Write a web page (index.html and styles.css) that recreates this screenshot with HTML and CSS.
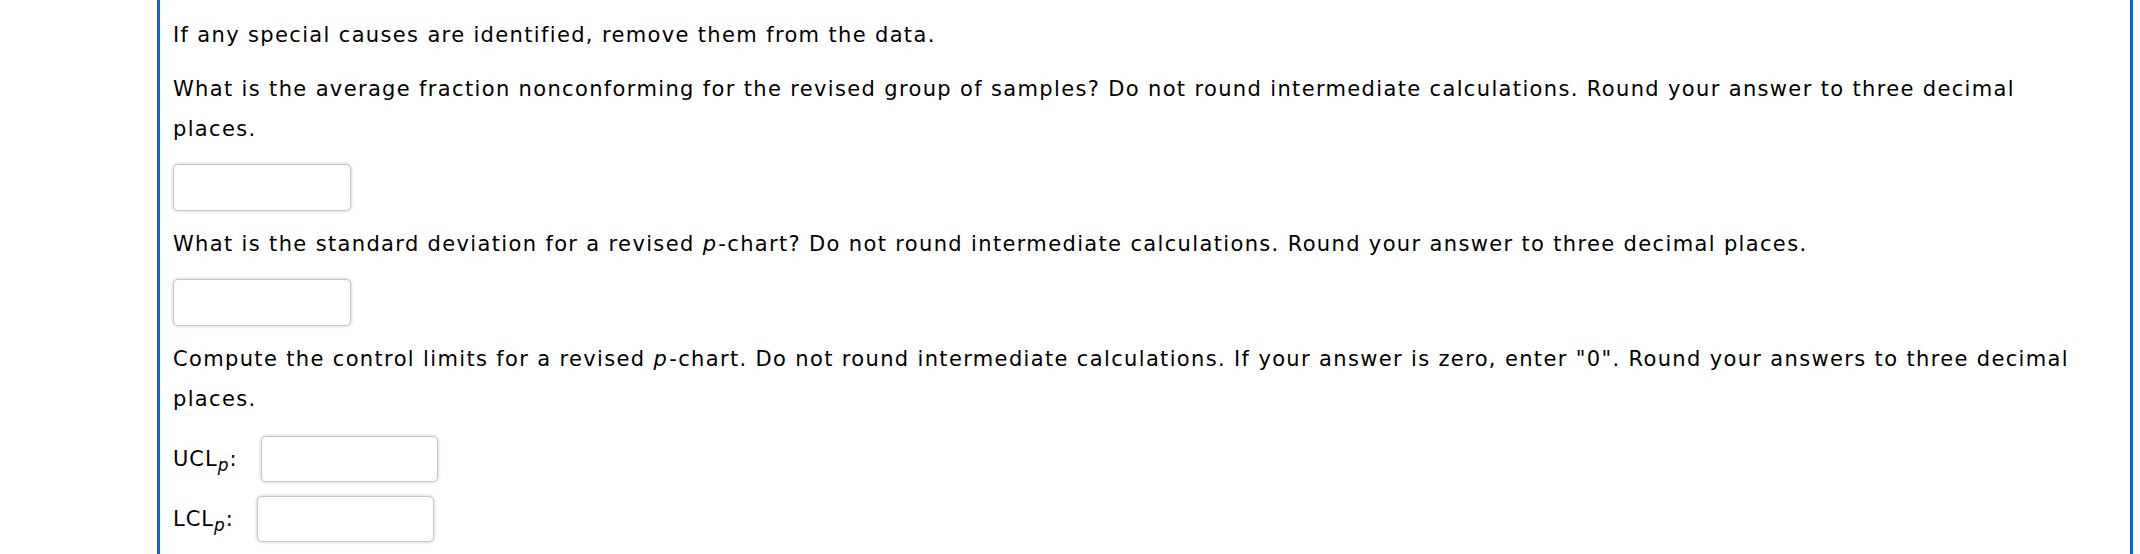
FILE: index.html
```html
<!DOCTYPE html>
<html lang="en">
<head>
<meta charset="utf-8">
<title>Revised p-chart</title>
<link rel="stylesheet" href="styles.css">
</head>
<body>
<div class="panel">
  <p class="q q-first">If any special causes are identified, remove them from the data.</p>
  <p class="q">What is the average fraction nonconforming for the revised group of samples? Do not round intermediate calculations. Round your answer to three decimal places.</p>
  <div class="ans"><input class="box" type="text" aria-label="average fraction nonconforming"></div>
  <p class="q">What is the standard deviation for a revised <i>p</i>-chart? Do not round intermediate calculations. Round your answer to three decimal places.</p>
  <div class="ans"><input class="box" type="text" aria-label="standard deviation"></div>
  <p class="q">Compute the control limits for a revised <i>p</i>-chart. Do not round intermediate calculations. If your answer is zero, enter "0". Round your answers to three decimal places.</p>
  <div class="row row-ucl"><span class="lbl">UCL<sub><i>p</i></sub>:</span><input class="box box-sm" type="text" aria-label="UCL"></div>
  <div class="row row-lcl"><span class="lbl">LCL<sub><i>p</i></sub>:</span><input class="box box-sm" type="text" aria-label="LCL"></div>
</div>
</body>
</html>
```

FILE: styles.css
```css
html, body {
  margin: 0;
  padding: 0;
  background: #ffffff;
  height: 100%;
  overflow: hidden;
}

body {
  font-family: "DejaVu Sans", Verdana, sans-serif;
  font-size: 21px;
  color: #000000;
}

.panel {
  box-sizing: border-box;
  margin-left: 157px;
  width: 1976px;
  height: 554px;
  border-left: 3px solid #0a66cf;
  border-right: 3px solid #0a66cf;
  padding: 15px 40px 0 13px;
  display: flex;
  flex-direction: column;
  align-items: flex-start;
}

.q {
  margin: 0 0 14px 0;
  line-height: 40px;
  letter-spacing: 1.35px;
}

.q i {
  font-style: italic;
  padding-right: 1px;
}

.ans {
  margin: 1px 0 13px 0;
  display: flex;
}

.box {
  box-sizing: border-box;
  width: 178px;
  height: 47px;
  margin: 0;
  padding: 0 8px;
  border: 1px solid #c6c6c6;
  border-radius: 5px;
  background: #ffffff;
  box-shadow: 0 0 3px 1px rgba(0, 0, 0, 0.13);
  font: inherit;
  outline: none;
}

.row {
  display: flex;
  align-items: center;
}

.row-ucl {
  margin-top: 3px;
}

.row-lcl {
  margin-top: 14px;
}

.lbl {
  line-height: 40px;
  letter-spacing: 1px;
  margin-right: 23px;
}

.lbl sub {
  font-size: 17px;
  line-height: 0;
}

.box-sm {
  width: 177px;
  height: 46px;
}
```
